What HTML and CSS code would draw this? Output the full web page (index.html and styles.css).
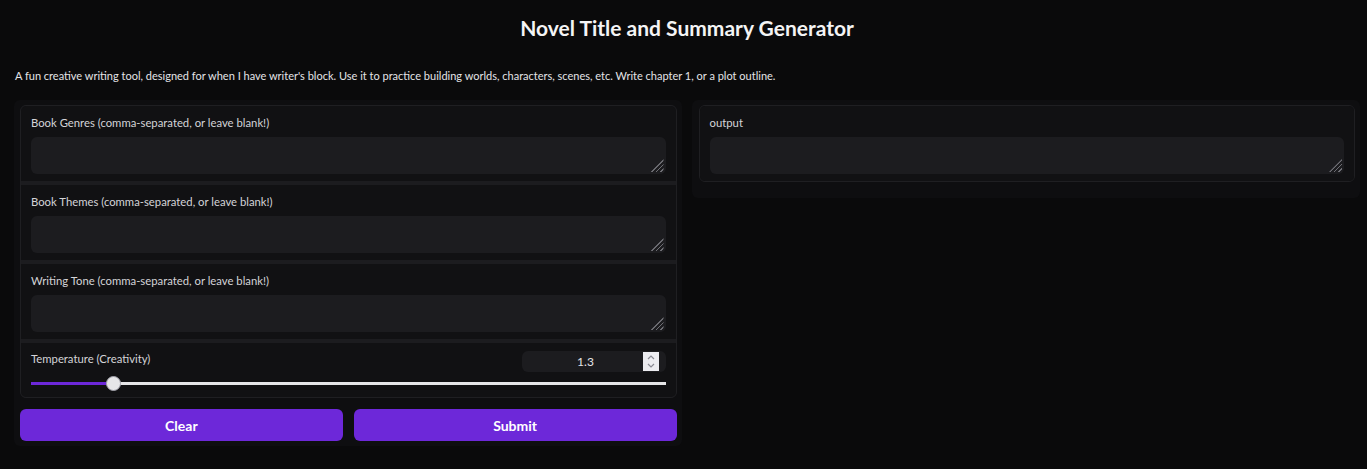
FILE: index.html
```html
<!DOCTYPE html>
<html lang="en">
<head>
<meta charset="utf-8">
<title>Novel Title and Summary Generator</title>
<link rel="stylesheet" href="styles.css">
</head>
<body>
<div class="app">
  <h1 class="title">Novel Title and Summary Generator</h1>
  <p class="desc">A fun creative writing tool, designed for when I have writer's block. Use it to practice building worlds, characters, scenes, etc. Write chapter 1, or a plot outline.</p>
  <div class="row">
    <div class="panel">
      <div class="form">
        <label class="block">
          <span class="label">Book Genres (comma-separated, or leave blank!)</span>
          <span class="ta-wrap"><textarea class="ta" rows="2"></textarea></span>
        </label>
        <label class="block">
          <span class="label">Book Themes (comma-separated, or leave blank!)</span>
          <span class="ta-wrap"><textarea class="ta" rows="2"></textarea></span>
        </label>
        <label class="block">
          <span class="label">Writing Tone (comma-separated, or leave blank!)</span>
          <span class="ta-wrap"><textarea class="ta" rows="2"></textarea></span>
        </label>
        <div class="block slider-block">
          <div class="slider-head">
            <span class="label">Temperature (Creativity)</span>
            <div class="num">
              <span class="num-val">1.3</span>
              <span class="spin">
                <svg width="16" height="19" viewBox="0 0 16 19"><path d="M5 7 L8 4 L11 7" fill="none" stroke="#8a8a93" stroke-width="1.2"/><path d="M5 12 L8 15 L11 12" fill="none" stroke="#8a8a93" stroke-width="1.2"/></svg>
              </span>
            </div>
          </div>
          <div class="track">
            <div class="fill"></div>
            <div class="thumb"></div>
          </div>
        </div>
      </div>
      <div class="buttons">
        <button class="btn">Clear</button>
        <button class="btn">Submit</button>
      </div>
    </div>
    <div class="panel panel-out">
      <div class="form">
        <label class="block">
          <span class="label">output</span>
          <span class="ta-wrap"><textarea class="ta" rows="2"></textarea></span>
        </label>
      </div>
    </div>
  </div>
</div>
</body>
</html>
```

FILE: styles.css
```css
* { box-sizing: border-box; }
html, body {
  margin: 0;
  background: #0a0a0b;
  font-family: "Lato", "Noto Sans", sans-serif;
  color: #e4e4e7;
}
.app {
  padding: 0 7px 0 14px;
}
.title {
  margin: 0;
  padding-top: 15px;
  height: 42px;
  text-align: center;
  font-size: 21px;
  font-weight: 700;
  line-height: 26px;
  color: #f4f4f5;
}
.desc {
  margin: 26px 0 0 1px;
  font-size: 11px;
  line-height: 16px;
  height: 16px;
  color: #e4e4e7;
}
.row {
  display: flex;
  gap: 10px;
  margin-top: 16px;
  align-items: flex-start;
}
.panel {
  flex: 1;
  background: #0e0e10;
  border-radius: 6px;
  padding: 5px 5px 5px 6px;
}
.panel-out {
  padding: 5px 5px 16px 7px;
}
.form {
  display: flex;
  flex-direction: column;
  gap: 4px;
  background: #1c1c1f;
  border: 1px solid #1f1f22;
  border-radius: 6px;
  overflow: hidden;
}
.block {
  display: flex;
  flex-direction: column;
  background: #111113;
  padding: 10px 10px 7px 10px;
}
.label {
  font-size: 11.3px;
  line-height: 14px;
  color: #d4d4d8;
  margin-bottom: 7px;
}
.ta-wrap {
  position: relative;
  display: block;
}
.ta-wrap::after {
  content: "";
  position: absolute;
  right: 2px;
  bottom: 2px;
  width: 13px;
  height: 13px;
  background: repeating-linear-gradient(135deg, transparent 0 2.2px, #6e6e74 2.2px 3.3px);
  clip-path: polygon(100% 0, 100% 100%, 0 100%);
  pointer-events: none;
}
.ta {
  display: block;
  width: 100%;
  height: 37px;
  background: #1c1c1f;
  border: none;
  border-radius: 6px;
  outline: none;
  color: #e4e4e7;
  font-family: inherit;
  resize: none;
}
.slider-block {
  padding-top: 8px;
  padding-bottom: 12px;
}
.slider-head {
  display: flex;
  justify-content: space-between;
  align-items: flex-start;
}
.slider-head .label {
  margin-top: 1px;
  margin-bottom: 0;
}
.num {
  width: 144px;
  height: 21px;
  background: #1c1c1f;
  border-radius: 6px;
  display: flex;
  align-items: center;
  justify-content: center;
  position: relative;
}
.num-val {
  font-size: 12px;
  color: #e4e4e7;
  margin-left: -16px;
}
.spin {
  position: absolute;
  right: 7px;
  top: 1px;
  width: 16px;
  height: 19px;
  background: #ececf0;
  display: flex;
}
.track {
  position: relative;
  height: 3px;
  margin-top: 10px;
  background: #e6e6e8;
}
.fill {
  height: 100%;
  width: 82px;
  background: #6d28d9;
}
.thumb {
  position: absolute;
  left: 75px;
  top: -6px;
  width: 15px;
  height: 15px;
  border-radius: 50%;
  background: #e6e6e8;
  border: 1px solid #a1a1aa;
}
.buttons {
  display: flex;
  gap: 11px;
  margin-top: 11px;
}
.btn {
  flex: 1;
  height: 32px;
  background: #6d28d9;
  border: none;
  border-radius: 6px;
  color: #fff;
  font-family: inherit;
  font-size: 14px;
  font-weight: 700;
}
```
